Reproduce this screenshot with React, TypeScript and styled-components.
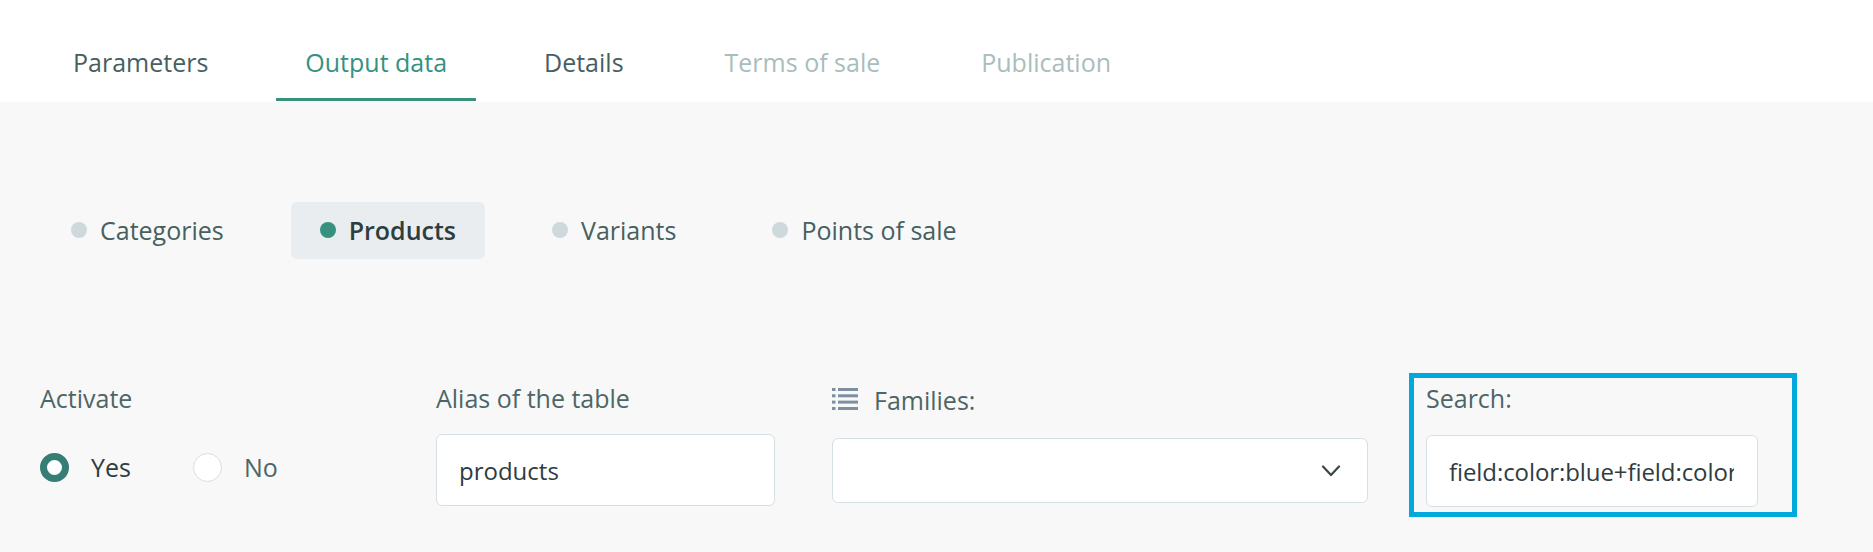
import React from "react";
import styled, { createGlobalStyle } from "styled-components";

const Global = createGlobalStyle`
  html, body { margin: 0; padding: 0; background: #f8f8f8; }
  body { font-family: "Open Sans", "Liberation Sans", sans-serif; }
  * { box-sizing: border-box; }
`;

const Page = styled.div`
  width: 1873px;
  height: 552px;
  overflow: hidden;
  background: #f8f8f8;
  display: flex;
  flex-direction: column;
`;

const Header = styled.nav`
  height: 102px;
  background: #fff;
  padding-left: 44px;
  display: flex;
  gap: 39px;
`;

const Tab = styled.div<{ $state: "normal" | "active" | "disabled" }>`
  height: 101px;
  padding: 43px 29px 0;
  margin-left: ${(p) => (p.$state === "disabled" ? 4 : 0)}px;
  font-size: 25px;
  line-height: 38px;
  color: ${(p) => (p.$state === "active" ? "#36917f" : p.$state === "disabled" ? "#a9bdbd" : "#47605f")};
  border-bottom: 3px solid ${(p) => (p.$state === "active" ? "#36917f" : "transparent")};
`;

const SubTabs = styled.div`
  margin-top: 100px;
  padding-left: 42px;
  display: flex;
  gap: 38px;
`;

const SubTab = styled.div<{ $active?: boolean }>`
  height: 57px;
  padding: 0 29px 2px;
  display: flex;
  align-items: center;
  gap: 13px;
  border-radius: 6px;
  font-size: 25px;
  font-weight: ${(p) => (p.$active ? 600 : 400)};
  color: ${(p) => (p.$active ? "#2e3d3f" : "#47605f")};
  background: ${(p) => (p.$active ? "#e9edf0" : "transparent")};
`;

const Dot = styled.span<{ $active?: boolean }>`
  width: 16px;
  height: 16px;
  border-radius: 50%;
  background: ${(p) => (p.$active ? "#36917f" : "#ced9de")};
`;

const FormRow = styled.div`
  margin-top: 114px;
  padding-left: 40px;
  display: flex;
  align-items: flex-start;
`;

const Field = styled.div<{ $width: number; $gap?: number }>`
  width: ${(p) => p.$width}px;
  margin-right: ${(p) => p.$gap ?? 0}px;
  padding-top: 11px;
  display: flex;
  flex-direction: column;
`;

const Label = styled.label`
  height: 28px;
  margin-bottom: 22px;
  font-size: 25px;
  line-height: 28px;
  color: #4c6667;
  display: flex;
  align-items: center;
  white-space: nowrap;
`;

const IconLabel = styled(Label)`
  gap: 16px;
  height: 32px;
  margin-bottom: 22px;
  svg { flex: none; margin-top: -2px; }
`;

const RadioRow = styled.div`
  margin-top: 19px;
  display: flex;
  align-items: center;
`;

const RadioCircle = styled.span<{ $on?: boolean }>`
  width: 29px;
  height: 29px;
  border-radius: 50%;
  background: #fff;
  border: ${(p) => (p.$on ? "7px solid #357d75" : "1px solid #d5dfe2")};
  margin-right: 22px;
`;

const RadioText = styled.span<{ $on?: boolean }>`
  font-size: 25px;
  line-height: 29px;
  color: ${(p) => (p.$on ? "#303c3f" : "#4c6667")};
  margin-right: 62px;
`;

const TextInput = styled.input`
  width: 100%;
  height: 72px;
  padding: 0 23px 0 22px;
  background: #fff;
  border: 1px solid #d6e0e4;
  border-radius: 6px;
  outline: none;
  font-family: inherit;
  font-size: 24px;
  color: #303c3f;
`;

const SearchInput = styled(TextInput)`
  letter-spacing: -0.08px;
`;

const Select = styled.div`
  height: 65px;
  background: #fff;
  border: 1px solid #d6e0e4;
  border-radius: 6px;
  display: flex;
  align-items: center;
  justify-content: flex-end;
  padding-right: 26px;
`;

const Highlight = styled.div`
  width: 388px;
  margin-left: 41px;
  height: 144px;
  border: 5px solid #00a8db;
  padding: 6px 34px 5px 12px;
  display: flex;
  flex-direction: column;
`;

const HighlightLabel = styled(Label)`
  margin-bottom: 23px;
`;

const tabs: [string, "normal" | "active" | "disabled"][] = [
  ["Parameters", "normal"],
  ["Output data", "active"],
  ["Details", "normal"],
  ["Terms of sale", "disabled"],
  ["Publication", "disabled"],
];

export default function App() {
  return (
    <Page>
      <Global />
      <Header>
        {tabs.map(([t, s]) => (
          <Tab key={t} $state={s}>{t}</Tab>
        ))}
      </Header>
      <SubTabs>
        {["Categories", "Products", "Variants", "Points of sale"].map((t) => (
          <SubTab key={t} $active={t === "Products"}>
            <Dot $active={t === "Products"} />
            {t}
          </SubTab>
        ))}
      </SubTabs>
      <FormRow>
        <Field $width={396}>
          <Label>Activate</Label>
          <RadioRow>
            <RadioCircle $on />
            <RadioText $on>Yes</RadioText>
            <RadioCircle />
            <RadioText>No</RadioText>
          </RadioRow>
        </Field>
        <Field $width={339} $gap={57}>
          <Label>Alias of the table</Label>
          <TextInput readOnly value="products" />
        </Field>
        <Field $width={536}>
          <IconLabel>
            <svg width="26" height="22" viewBox="0 0 26 22" fill="#7f8fa3">
              <rect x="0" y="0" width="3.5" height="3" />
              <rect x="6" y="0" width="20" height="3" />
              <rect x="0" y="6.3" width="3.5" height="3" />
              <rect x="6" y="6.3" width="20" height="3" />
              <rect x="0" y="12.6" width="3.5" height="3" />
              <rect x="6" y="12.6" width="20" height="3" />
              <rect x="0" y="19" width="3.5" height="3" />
              <rect x="6" y="19" width="20" height="3" />
            </svg>
            Families:
          </IconLabel>
          <Select>
            <svg width="20" height="12" viewBox="0 0 20 12" fill="none" stroke="#3a4648" strokeWidth="2.2" strokeLinecap="round" strokeLinejoin="round">
              <path d="M2 1.5 L10 10 L18 1.5" />
            </svg>
          </Select>
        </Field>
        <Highlight>
          <HighlightLabel>Search:</HighlightLabel>
          <SearchInput readOnly value="field:color:blue+field:color:red" />
        </Highlight>
      </FormRow>
    </Page>
  );
}
